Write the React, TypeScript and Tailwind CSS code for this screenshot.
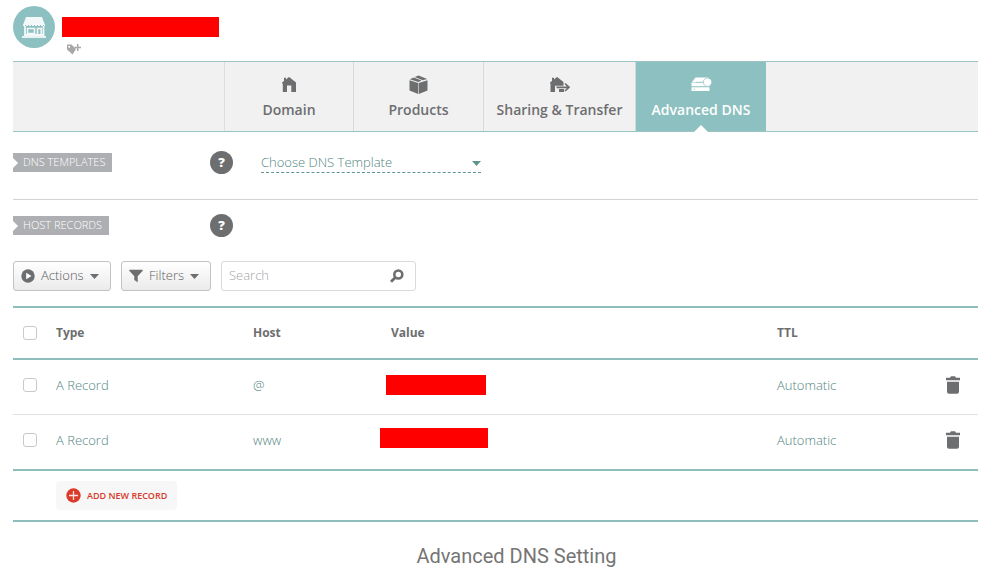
import type { ReactNode } from "react";

function StoreIcon() {
  return (
    <svg width="24" height="23" viewBox="0 0 24 23" fill="none" aria-hidden="true">
      <path d="M4 1h16l3 8H1z" fill="#f4f8f8" />
      <path d="M1 9.500h22" stroke="#f4f8f8" strokeWidth="1.200" strokeDasharray="2 1" />
      <path d="M3 10v9h18.500v-9" stroke="#f4f8f8" strokeWidth="1.800" />
      <path d="M5.500 12.500h7v5h-7zM15.500 19v-6.500h3.700V19" stroke="#f4f8f8" strokeWidth="1.500" />
      <path d="M0 21h24" stroke="#f4f8f8" strokeWidth="1.800" />
    </svg>
  );
}

function TagPlusIcon() {
  return (
    <svg width="15" height="11" viewBox="0 0 15 11" aria-hidden="true">
      <path
        fillRule="evenodd"
        d="M0 .5h4.500L9 5 5.500 10.500 0 5.500zM2.200 1.700a1 1 0 1 0 0 2 1 1 0 0 0 0-2z"
        fill="#a5a7a9"
      />
      <path d="M10.700 0v7M7.500 3.500h6.500" stroke="#a5a7a9" strokeWidth="1.500" />
    </svg>
  );
}

function HouseIcon() {
  return (
    <svg width="14" height="15" viewBox="0 0 14 15" fill="#6d6e70" aria-hidden="true">
      <path d="M0 5.500 2 4V.8h2v1.700L6.500.3h1L14 5.500V15H9.300V8.500H5V15H.8V6.500H0z" />
    </svg>
  );
}

function BoxIcon() {
  return (
    <svg width="19" height="19" viewBox="0 0 19 19" fill="#6d6e70" aria-hidden="true">
      <path d="M.5 5.300 9.200 8v11L.5 15.500zM18.500 5.300 9.800 8v11l8.700-3.500z" />
      <path d="M.8 4.300 4.800 2.500 12.500 5.600 9.500 7zM5.800 2.100 9.500.5l8.700 3.600-4.500 1.200z" />
    </svg>
  );
}

function TransferIcon() {
  return (
    <svg width="20" height="15" viewBox="0 0 20 15" aria-hidden="true">
      <path d="M0 5.500 2 4V.8h2v1.700L6.500.3h1L13.500 5v3.800H5V15H.5V6.500H0z" fill="#6d6e70" />
      <path d="M9 12h5v3H9z" fill="#6d6e70" />
      <path d="M6.500 10.300h12M15 6.500l4 3.800-4 3.700" fill="none" stroke="#6d6e70" strokeWidth="1.700" />
    </svg>
  );
}

function ServerIcon() {
  return (
    <svg width="21" height="15" viewBox="0 0 21 15" aria-hidden="true">
      <path d="M4.500.5H17l2.500 4.500H1z" fill="#fff" />
      <path d="M.5 5.500h18v3.800H.5zM.5 10.200h18V14H.5z" fill="#fff" />
      <path d="M5 5.300h8M2.500 12.200h1.500" stroke="#8dc0c0" strokeWidth=".7" />
      <circle cx="16.500" cy="5.200" r="4.200" fill="#fff" stroke="#8dc0c0" strokeWidth=".7" />
    </svg>
  );
}

function PlayIcon() {
  return (
    <svg width="14" height="14" viewBox="0 0 14 14" aria-hidden="true">
      <circle cx="7" cy="7" r="6.700" fill="#6d6e70" />
      <path d="M5.200 3.800v6.400L10.500 7z" fill="#fff" />
    </svg>
  );
}

function FunnelIcon() {
  return (
    <svg width="14" height="14" viewBox="0 0 14 14" aria-hidden="true">
      <path d="M.3.700h13.400v1L8.700 7.200v6L5.300 11V7.200L.3 1.700z" fill="#6d6e70" />
    </svg>
  );
}

function SearchIcon() {
  return (
    <svg width="14" height="14" viewBox="0 0 14 14" fill="none" stroke="#6d6e70" aria-hidden="true">
      <circle cx="8.300" cy="5.500" r="4" strokeWidth="2.600" />
      <path d="m5.300 8.500-4.300 4.300" strokeWidth="2.800" />
    </svg>
  );
}

function TrashIcon() {
  return (
    <svg width="14" height="18" viewBox="0 0 14 18" fill="#6d6e70" aria-hidden="true">
      <path d="M0 1.700h4L5 .3h4l1 1.400h4v2.600H0z" />
      <path d="M1 5.800h12v9.900a2 2 0 0 1-2 2H3a2 2 0 0 1-2-2z" />
    </svg>
  );
}

function PlusCircleIcon() {
  return (
    <svg width="15" height="15" viewBox="0 0 15 15" aria-hidden="true">
      <circle cx="7.500" cy="7.500" r="7.200" fill="#db3a28" />
      <path d="M7.500 3v9M3 7.500h9" stroke="#f9e3e0" strokeWidth="1.300" />
    </svg>
  );
}

function Caret({ color }: { color: string }) {
  return (
    <svg width="9" height="5" viewBox="0 0 9 5" fill={color} aria-hidden="true">
      <path d="M0 0h9L4.500 5z" />
    </svg>
  );
}

function Tab({ icon, label, width, active = false }: { icon: ReactNode; label: string; width: string; active?: boolean }) {
  return (
    <a
      href="#"
      aria-current={active ? "page" : undefined}
      className={`relative flex flex-col items-center pt-[11px] text-[14px] leading-5 font-semibold ${width} ${
        active ? "bg-[#8dc0c0] text-white" : "border-r border-[#d5d9d9] text-[#6d6e70]"
      }`}
    >
      <span className="mb-[5px] flex h-[22px] items-center">{icon}</span>
      {label}
      {active && (
        <svg className="absolute -bottom-px left-1/2 -translate-x-1/2" width="14" height="7" viewBox="0 0 14 7" aria-hidden="true">
          <path d="M7 0l7 7H0z" fill="#fff" />
        </svg>
      )}
    </a>
  );
}

function SectionHeading({ children }: { children: string }) {
  return (
    <div className="flex w-[197px] shrink-0">
      <h2 className="relative bg-[#adafb2] pr-[7px] pb-px pl-[10px] text-[11px] leading-[18px] font-light text-white">
        <svg className="absolute top-[5px] left-0" width="5" height="10" viewBox="0 0 5 10" aria-hidden="true">
          <path d="M0 0l5 5-5 5z" fill="#fff" />
        </svg>
        {children}
      </h2>
    </div>
  );
}

function Help({ label }: { label: string }) {
  return (
    <button
      type="button"
      aria-label={label}
      className="flex size-[23px] shrink-0 items-center justify-center rounded-full bg-[#6d6e70] text-[13px] font-extrabold text-white"
    >
      ?
    </button>
  );
}

function Check({ label }: { label: string }) {
  return (
    <input
      type="checkbox"
      aria-label={label}
      className="block size-[14px] appearance-none rounded-[3px] border border-[#c8c9cb] bg-white checked:bg-[#8dc0c0]"
    />
  );
}

const toolButton =
  "flex h-[30px] items-center rounded-[3px] border border-[#c2c3c4] bg-linear-to-b from-white to-[#ebebeb] px-[7px] text-[13px] font-light text-[#5d5e60]";

const records = [
  { host: "@", cell: "pb-1 pl-[6px]", bar: "w-[100px]", line: "border-b border-[#e0e1e1]", height: "h-[55px]" },
  { host: "www", cell: "pb-2", bar: "w-[108px]", line: "border-b-2 border-[#8dbdbd]", height: "h-[56px]" },
];

export default function App() {
  return (
    <div className="min-h-screen bg-white pr-[10px] pl-[13px] font-['Open_Sans','Noto_Sans',sans-serif]">
      <header className="flex h-[61px] gap-[7px] pt-[6px]">
        <div className="flex size-[42px] items-center justify-center rounded-full bg-[#8dc0c0]">
          <StoreIcon />
        </div>
        <div className="pt-[11px]">
          <div className="h-5 w-[157px] bg-[#ff0000]" />
          <button type="button" aria-label="Add tag" className="mt-[7px] ml-[5px] block">
            <TagPlusIcon />
          </button>
        </div>
      </header>

      <nav className="flex h-[71px] border-y border-[#9cc4c2] bg-[#f1f1f1]">
        <div className="w-[212px] shrink-0 border-r border-[#dcdfdf]" />
        <Tab icon={<HouseIcon />} label="Domain" width="w-[129px]" />
        <Tab icon={<BoxIcon />} label="Products" width="w-[130px]" />
        <Tab icon={<TransferIcon />} label="Sharing &amp; Transfer" width="w-[152px]" />
        <Tab icon={<ServerIcon />} label="Advanced DNS" width="w-[130px]" active />
      </nav>

      <main>
        <section className="flex items-center border-b border-[#d2d4d4] pt-[19px] pb-[25px]">
          <SectionHeading>DNS TEMPLATES</SectionHeading>
          <Help label="About DNS templates" />
          <div className="relative ml-7 h-[23px] w-[220px]">
            <select
              aria-label="DNS template"
              className="block h-[22px] w-full appearance-none border-b border-dashed border-[#5f9490] bg-transparent text-[13px] leading-5 font-light text-[#528581]"
            >
              <option>Choose DNS Template</option>
            </select>
            <span className="pointer-events-none absolute top-[10px] right-0">
              <Caret color="#5f9490" />
            </span>
          </div>
        </section>

        <section className="pt-[14px]">
          <div className="flex items-center">
            <SectionHeading>HOST RECORDS</SectionHeading>
            <Help label="About host records" />
          </div>

          <div className="mt-6 flex gap-[10px]">
            <button type="button" className={`${toolButton} w-[98px]`}>
              <PlayIcon />
              <span className="mr-auto ml-[6px]">Actions</span>
              <span className="mr-1">
                <Caret color="#6d6e70" />
              </span>
            </button>
            <button type="button" className={`${toolButton} w-[90px]`}>
              <FunnelIcon />
              <span className="mr-auto ml-[6px]">Filters</span>
              <span className="mr-1">
                <Caret color="#6d6e70" />
              </span>
            </button>
            <label className="flex h-[30px] w-[195px] items-center rounded-[3px] border border-[#d9dadb] pr-[11px] pl-[7px]">
              <input
                type="search"
                aria-label="Search"
                placeholder="Search"
                className="min-w-0 flex-1 text-[13px] font-light text-[#6d6e70] outline-none placeholder:text-[#a4a5a7]"
              />
              <SearchIcon />
            </label>
          </div>

          <table className="mt-[15px] w-full table-fixed border-separate border-spacing-0 border-t-2 border-[#8dbdbd] text-left text-[13px] leading-5">
            <colgroup>
              <col className="w-[43px]" />
              <col className="w-[197px]" />
              <col className="w-[127px]" />
              <col />
              <col className="w-[157px]" />
              <col className="w-[44px]" />
            </colgroup>
            <thead>
              <tr className="h-[52px] text-[12px] text-[#6d6e70] *:border-b-2 *:border-[#8dbdbd] *:p-0">
                <th>
                  <div className="pl-[10px]">
                    <Check label="Select all records" />
                  </div>
                </th>
                <th>Type</th>
                <th>Host</th>
                <th>
                  <div className="pl-[11px]">Value</div>
                </th>
                <th>TTL</th>
                <th />
              </tr>
            </thead>
            <tbody className="font-light text-[#528581]">
              {records.map((r) => (
                <tr key={r.host} className={r.height}>
                  <td className={`pb-1 pl-[10px] ${r.line}`}>
                    <Check label={`Select A record ${r.host}`} />
                  </td>
                  <td className={`pb-1 ${r.line}`}>A Record</td>
                  <td className={`pb-1 ${r.line}`}>{r.host}</td>
                  <td className={`${r.cell} ${r.line}`}>
                    <div className={`h-5 bg-[#ff0000] ${r.bar}`} />
                  </td>
                  <td className={`pb-1 ${r.line}`}>Automatic</td>
                  <td className={`pb-1 pl-[12px] ${r.line}`}>
                    <button type="button" aria-label={`Delete A record ${r.host}`} className="block">
                      <TrashIcon />
                    </button>
                  </td>
                </tr>
              ))}
            </tbody>
          </table>

          <div className="border-b-2 border-[#8dbdbd] py-[10px] pl-[43px]">
            <button
              type="button"
              className="flex h-[29px] items-center gap-[6px] rounded-[4px] bg-[#f7f7f7] px-[10px] text-[9px] font-semibold text-[#d6392b]"
            >
              <PlusCircleIcon />
              ADD NEW RECORD
            </button>
          </div>
        </section>

        <p className="ml-[42px] pt-[22px] text-center font-[Roboto,'Liberation_Sans',sans-serif] text-[20px] leading-6 text-[#757575]">
          Advanced DNS Setting
        </p>
      </main>
    </div>
  );
}
